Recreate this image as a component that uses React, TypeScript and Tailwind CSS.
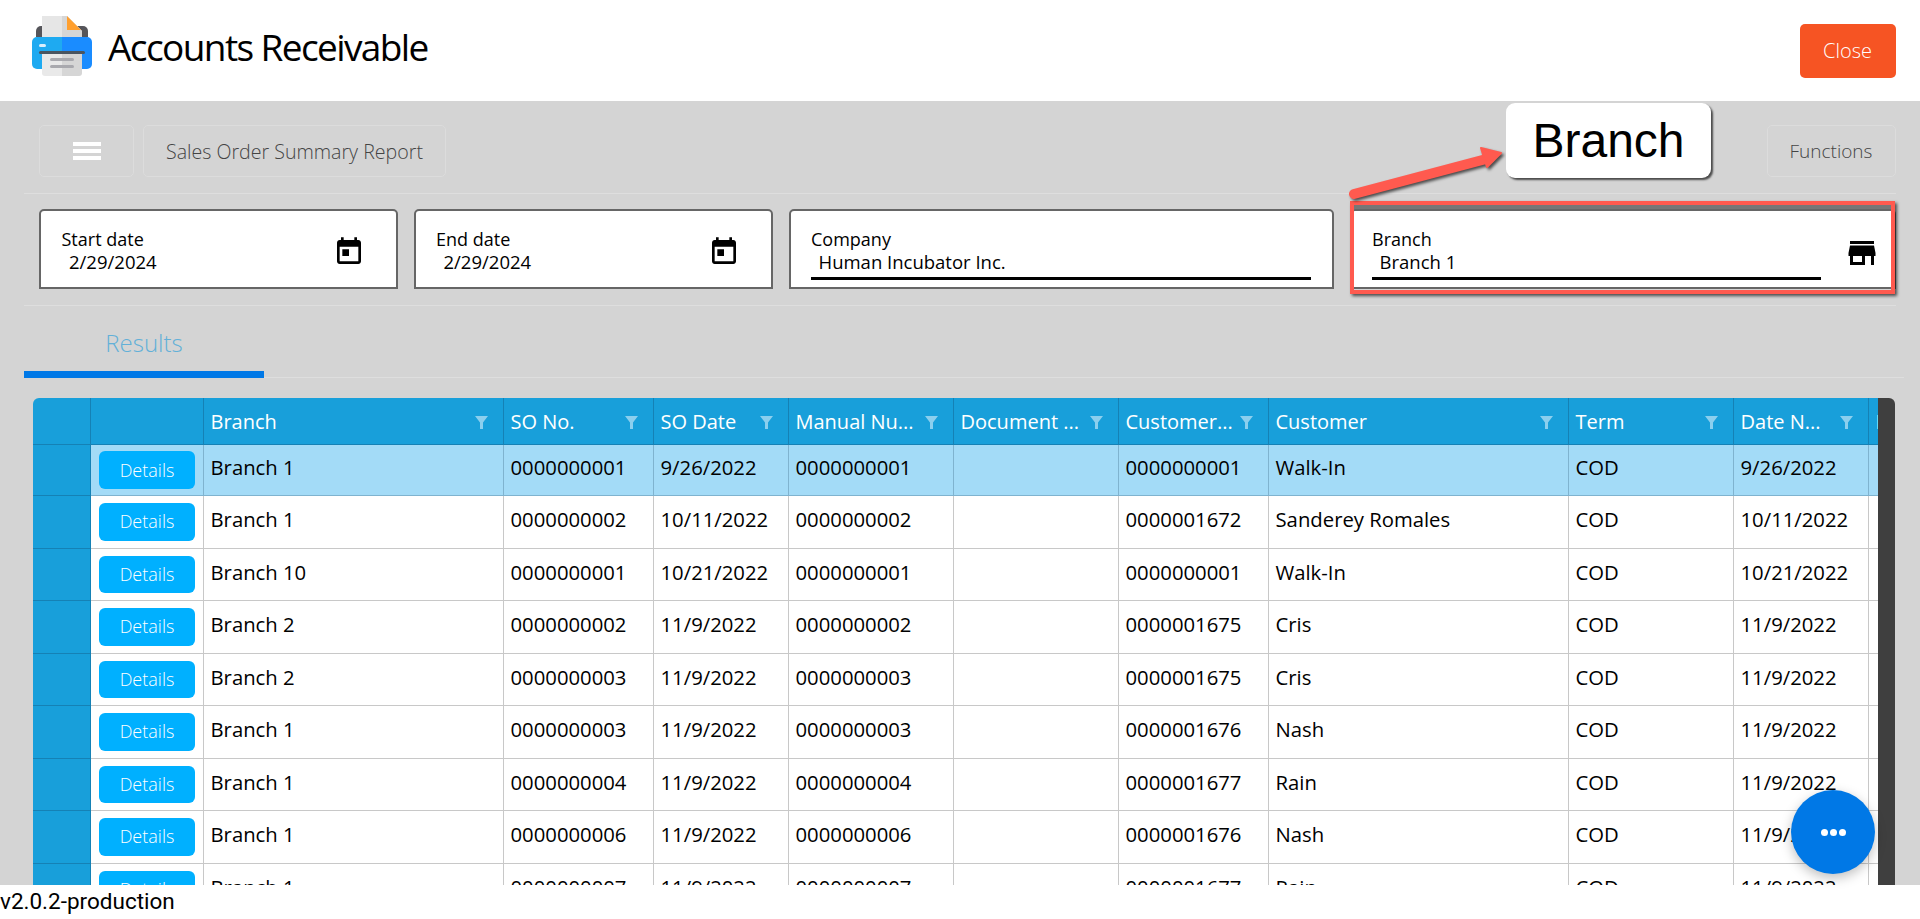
// App.tsx
// Accounts Receivable: Sales Order Summary Report screen with the "Branch" callout on top.

type Row = { branch: string; so: string; date: string; custNo: string; customer: string };

const rows: Row[] = [
  { branch: "Branch 1", so: "0000000001", date: "9/26/2022", custNo: "0000000001", customer: "Walk-In" },
  { branch: "Branch 1", so: "0000000002", date: "10/11/2022", custNo: "0000001672", customer: "Sanderey Romales" },
  { branch: "Branch 10", so: "0000000001", date: "10/21/2022", custNo: "0000000001", customer: "Walk-In" },
  { branch: "Branch 2", so: "0000000002", date: "11/9/2022", custNo: "0000001675", customer: "Cris" },
  { branch: "Branch 2", so: "0000000003", date: "11/9/2022", custNo: "0000001675", customer: "Cris" },
  { branch: "Branch 1", so: "0000000003", date: "11/9/2022", custNo: "0000001676", customer: "Nash" },
  { branch: "Branch 1", so: "0000000004", date: "11/9/2022", custNo: "0000001677", customer: "Rain" },
  { branch: "Branch 1", so: "0000000006", date: "11/9/2022", custNo: "0000001676", customer: "Nash" },
  { branch: "Branch 1", so: "0000000007", date: "11/9/2022", custNo: "0000001677", customer: "Rain" },
];

const gridCols = "grid grid-cols-[58px_113px_300px_150px_135px_165px_165px_150px_300px_165px_135px_150px]";

function PrinterLogo() {
  return (
    <svg viewBox="0 0 60 60" className="mb-[10px] h-[60px] w-[60px] shrink-0">
      <path d="M4 21v-6a5 5 0 0 1 5-5h42a5 5 0 0 1 5 5v6z" fill="#55555a" />
      <path d="M10 0h25l15 15v8H10z" fill="#e6e6e6" />
      <path d="M30 0h5l15 15v8H30z" fill="#d6d6d6" />
      <path d="M35 0l14 14H35z" fill="#ff9f2e" />
      <path d="M5 21h25v32H5a5 5 0 0 1-5-5V26a5 5 0 0 1 5-5z" fill="#1eaaf1" />
      <path d="M30 21h25a5 5 0 0 1 5 5v22a5 5 0 0 1-5 5H30z" fill="#1a8cff" />
      <rect x="7" y="28" width="7" height="3" rx="1.5" fill="#d8eefc" />
      <rect x="7" y="35" width="46" height="3" rx="1.5" fill="#4a5560" />
      <path d="M10 38h20v22H13a3 3 0 0 1-3-3z" fill="#e9e9e9" />
      <path d="M30 38h20v19a3 3 0 0 1-3 3H30z" fill="#d6d6d6" />
      <rect x="18" y="42" width="24" height="3" rx="1.5" fill="#a9a9ae" />
      <rect x="18" y="49" width="24" height="3" rx="1.5" fill="#a9a9ae" />
    </svg>
  );
}

function TodayIcon() {
  return (
    <svg viewBox="0 0 24 24" className="mt-[25px] mr-[31px] h-8 w-8 shrink-0 self-start" fill="#000">
      <path d="M19 3h-1V1h-2v2H8V1H6v2H5c-1.11 0-1.99.9-1.99 2L3 19c0 1.1.89 2 2 2h14c1.1 0 2-.9 2-2V5c0-1.1-.9-2-2-2zm0 16H5V8h14v11zM7 10h5v5H7z" />
    </svg>
  );
}

function StoreIcon() {
  return (
    <svg viewBox="0 0 24 24" className="mt-[24px] mr-[14px] h-9 w-9 shrink-0 self-start" fill="#000">
      <path d="M20 4H4v2h16V4zm1 10v-2l-1-5H4l-1 5v2h1v6h10v-6h4v6h2v-6h1zm-9 4H6v-4h6v4z" />
    </svg>
  );
}

function FilterIcon() {
  return (
    <svg viewBox="0 0 13 13" className="h-[13px] w-[13px] shrink-0" fill="#8bcfee">
      <path d="M0 0h13L8 6.5V13H5V6.5z" />
    </svg>
  );
}

function Field({ label, value, width, underline, icon }: {
  label: string; value: string; width: string; underline?: string; icon?: React.ReactNode;
}) {
  return (
    <div className={`flex h-20 shrink-0 rounded-t-[5px] border-2 border-[#666] bg-white ${width}`}>
      <div className="min-w-0 flex-1 pt-[17px] pl-[20.5px]">
        <div className="text-[18px] leading-[22px] text-black">{label}</div>
        <div className="pl-[7.5px] text-[18.5px] leading-[24px] text-black">{value}</div>
        {underline && <div className={`mt-[3px] h-[3px] bg-black ${underline}`} />}
      </div>
      {icon}
    </div>
  );
}

function HeaderCell({ label, filter = true }: { label: string; filter?: boolean }) {
  return (
    <div className="flex items-center justify-between border-r border-[#1581b5] pt-[2px] pr-[15px] pl-[6.5px] text-[20px] whitespace-nowrap text-white">
      <span>{label}</span>
      {filter && <FilterIcon />}
    </div>
  );
}

function BodyCell({ value, selected }: { value: string; selected: boolean }) {
  return (
    <div className={`flex items-center border-r border-b pb-[5px] pl-[6.5px] text-[20.3px] whitespace-nowrap text-black ${selected ? "border-[#7fb3cf]" : "border-[#c8c8c8]"}`}>
      {value}
    </div>
  );
}

export default function App() {
  return (
    <div className="relative flex h-[919px] w-[1920px] flex-col overflow-hidden bg-white font-['Open_Sans',sans-serif]">
      {/* Title bar */}
      <header className="flex h-[101px] shrink-0 items-center pr-[24.5px] pl-[32px]">
        <PrinterLogo />
        <h1 className="mb-[7px] ml-[16px] text-[37px] font-normal tracking-[-1.6px] text-black">Accounts Receivable</h1>
        <button className="ml-auto flex h-[54px] w-[96px] items-center justify-center rounded-[5px] bg-[#f65423] text-[20px] font-light text-white">Close</button>
      </header>

      <main className="flex min-h-0 flex-1 flex-col bg-[#d4d4d4] pt-[24px]">
        {/* Toolbar */}
        <div className="flex h-[52px] shrink-0 pr-[24.5px] pl-[39px]">
          <button className="flex w-[95px] items-center justify-center rounded-[5px] border border-[#dcdcdc]">
            <span className="flex w-[28px] flex-col gap-[3px]">
              <span className="h-[4px] bg-white" />
              <span className="h-[4px] bg-white" />
              <span className="h-[4px] bg-white" />
            </span>
          </button>
          <div className="ml-[9px] flex w-[303px] items-center justify-center rounded-[5px] border border-[#dcdcdc] pt-[1px] text-[19.6px] font-light text-[#444]">Sales Order Summary Report</div>
          <button className="ml-auto flex w-[129px] items-center justify-center rounded-[5px] border border-[#dcdcdc] text-[19px] font-light text-[#444]">Functions</button>
        </div>
        <div className="mx-[24px] mt-[16px] h-px shrink-0 bg-[#dedede]" />

        {/* Filters */}
        <div className="mt-[15px] flex shrink-0 gap-4 pl-[39px]">
          <Field label="Start date" value="2/29/2024" width="w-[358.5px]" icon={<TodayIcon />} />
          <Field label="End date" value="2/29/2024" width="w-[359px]" icon={<TodayIcon />} />
          <Field label="Company" value="Human Incubator Inc." width="w-[545px] pr-[21px]" underline="w-full" />
          <Field label="Branch" value="Branch 1" width="w-[546px]" underline="mr-[23px]" icon={<StoreIcon />} />
        </div>
        <div className="mx-[24px] mt-[16px] h-px shrink-0 bg-[#dedede]" />

        {/* Tabs */}
        <div className="mt-[16px] flex h-[56px] shrink-0 items-end pl-[24px]">
          <div className="flex h-full w-[240px] flex-col">
            <div className="flex flex-1 items-center justify-center pb-[7px] text-[24px] font-light text-[#62b0d8]">Results</div>
            <div className="h-[7px] bg-[#0078e6]" />
          </div>
          <div className="mr-[16px] h-px flex-1 bg-[#dedede]" />
        </div>

        {/* Results grid */}
        <div className="mt-[20px] ml-[33px] flex min-h-0 w-[1862px] flex-1 overflow-hidden rounded-t-[6px]">
          <div className="w-[1845px] shrink-0 overflow-hidden">
            <div className={`${gridCols} h-[47px] w-max border-b border-[#1581b5] bg-[#189fda]`}>
              <HeaderCell label="" filter={false} />
              <HeaderCell label="" filter={false} />
              <HeaderCell label="Branch" />
              <HeaderCell label="SO No." />
              <HeaderCell label="SO Date" />
              <HeaderCell label="Manual Nu..." />
              <HeaderCell label="Document ..." />
              <HeaderCell label="Customer..." />
              <HeaderCell label="Customer" />
              <HeaderCell label="Term" />
              <HeaderCell label="Date N..." />
              <HeaderCell label="Date" filter={false} />
            </div>
            {rows.map((r, i) => {
              const selected = i === 0;
              return (
                <div key={i} className={`${gridCols} w-max ${selected ? "h-[51px] bg-[#a3dbf7]" : "h-[52.5px] bg-white"}`}>
                  <div className="border-r border-b border-[#1581b5] bg-[#189fda]" />
                  <div className={`flex items-center justify-center border-r border-b ${selected ? "border-[#7fb3cf]" : "border-[#c8c8c8]"}`}>
                    <button className="h-[37.5px] w-[96px] rounded-[6px] bg-[#00b0ff] text-[18px] font-light text-white">Details</button>
                  </div>
                  {[r.branch, r.so, r.date, r.so, "", r.custNo, r.customer, "COD", r.date, ""].map((v, j) => (
                    <BodyCell key={j} value={v} selected={selected} />
                  ))}
                </div>
              );
            })}
          </div>
          <div className="w-[17px] shrink-0 bg-[#3f3f3f]" />
        </div>
      </main>

      {/* Footer */}
      <footer className="flex h-[34px] shrink-0 items-center bg-white font-['Roboto',sans-serif] text-[22.5px] text-black">v2.0.2-production</footer>

      {/* Floating action button */}
      <button className="absolute top-[790px] left-[1791px] flex h-[84px] w-[84px] items-center justify-center gap-[2px] rounded-full bg-[#0078e6] shadow-[0_4px_12px_rgba(0,0,0,0.25)]">
        <span className="h-[7px] w-[7px] rounded-full bg-white" />
        <span className="h-[7px] w-[7px] rounded-full bg-white" />
        <span className="h-[7px] w-[7px] rounded-full bg-white" />
      </button>

      {/* Annotation: red frame, arrow and Branch callout */}
      <div className="absolute top-[201px] left-[1350px] h-[93px] w-[545px] border-4 border-[#ff5a4f] shadow-[2px_2px_3px_rgba(0,0,0,0.65),inset_0_4px_0_#777]" />
      <svg className="absolute top-[140px] left-[1340px] h-[70px] w-[170px] drop-shadow-[2px_2px_1.5px_rgba(0,0,0,0.65)]" viewBox="0 0 170 70">
        <path d="M14 54L150 18" stroke="#ff5a4f" strokeWidth="10" strokeLinecap="round" fill="none" />
        <path d="M161 13L141 8L147 27z" fill="#ff5a4f" stroke="#ff5a4f" strokeWidth="2" strokeLinejoin="round" />
      </svg>
      <div className="absolute top-[103px] left-[1506px] flex h-[75px] w-[205px] items-center justify-center rounded-[9px] bg-white font-['Liberation_Sans',sans-serif] text-[48px] text-black shadow-[2px_2px_2px_rgba(0,0,0,0.65)]">Branch</div>
    </div>
  );
}
